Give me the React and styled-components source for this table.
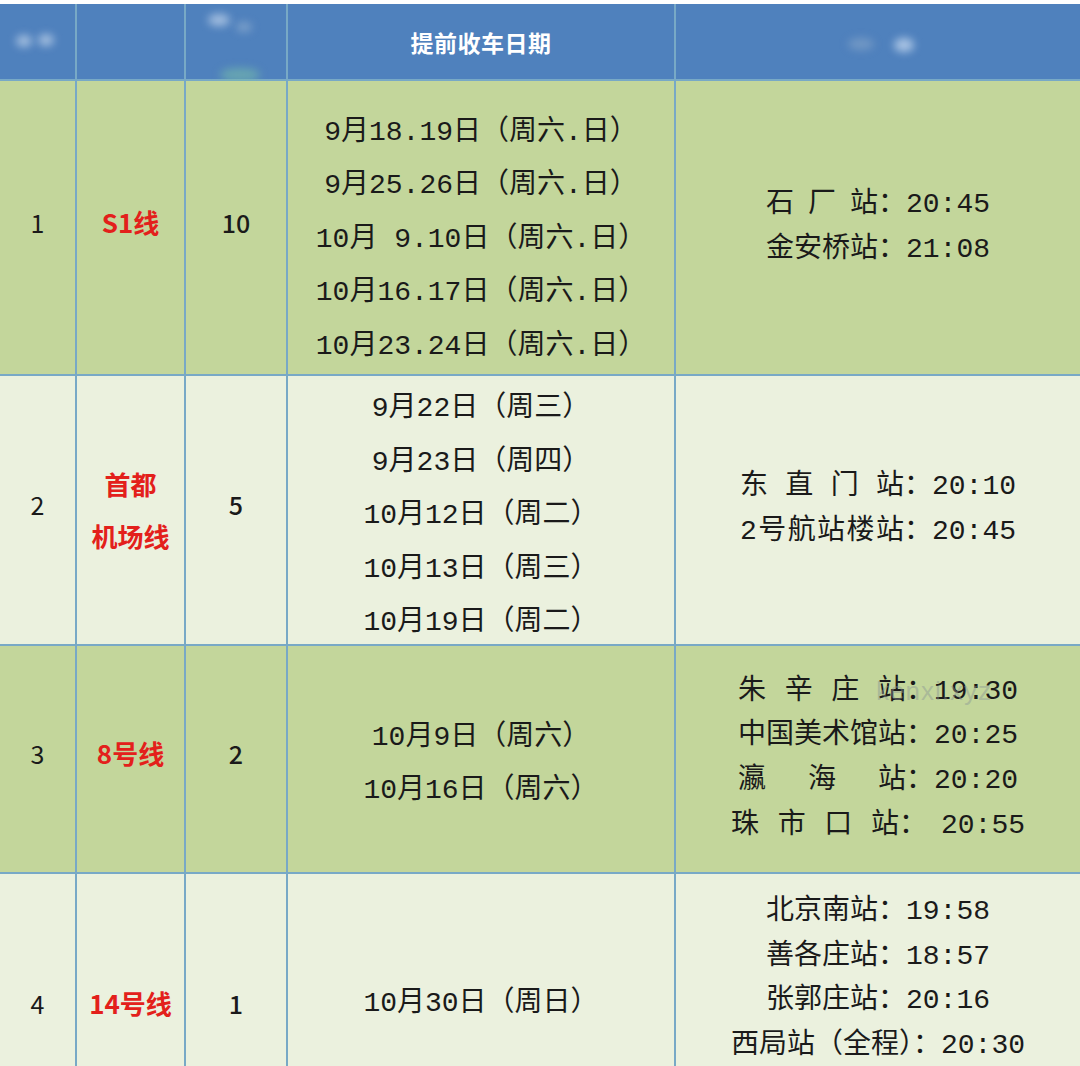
import React from "react";
import styled, { createGlobalStyle } from "styled-components";

const GlobalStyle = createGlobalStyle`
  html, body {
    margin: 0;
    padding: 0;
    background: #ffffff;
  }
  body {
    font-family: "Liberation Mono", "Noto Sans CJK SC", monospace;
    color: #1a1a1a;
  }
`;

const Page = styled.div`
  width: 1080px;
  height: 1066px;
  overflow: hidden;
  padding-top: 4px;
  box-sizing: border-box;
`;

const Table = styled.div`
  display: grid;
  grid-template-columns: 75px 107px 100px 386px 404px;
  grid-template-rows: 75px 293px 268px 226px 260px;
  gap: 2px;
  background: #78a9c6;
  width: 1080px;
`;

const Cell = styled.div`
  position: relative;
  display: flex;
  flex-direction: column;
  align-items: center;
  justify-content: ${(p) => (p.$top ? "flex-start" : "center")};
  padding-top: ${(p) => p.$pt || 0}px;
  box-sizing: border-box;
  background: ${(p) =>
    p.$tone === "head" ? "#4f81bd" : p.$tone === "green" ? "#c3d69b" : "#ebf1de"};
`;

const HeadText = styled.div`
  font-family: "Noto Sans CJK SC", sans-serif;
  font-weight: 700;
  font-size: 23px;
  color: #ffffff;
  letter-spacing: 0.5px;
`;

const Blob = styled.span`
  position: absolute;
  left: ${(p) => p.$x}px;
  top: ${(p) => p.$y}px;
  width: ${(p) => p.$w}px;
  height: ${(p) => p.$h}px;
  border-radius: 50%;
  background: ${(p) => p.$c || "rgba(220, 232, 246, 0.6)"};
  filter: blur(4px);
`;

const Num = styled.div`
  font-family: "Noto Sans CJK SC", sans-serif;
  font-size: 25px;
  font-weight: ${(p) => (p.$bold ? 500 : 400)};
  color: #1a1a1a;
  margin-bottom: ${(p) => p.$lift || 0}px;
`;

const LineName = styled.div`
  font-family: "Noto Sans CJK SC", sans-serif;
  font-size: 26px;
  font-weight: 700;
  color: #e3201b;
  line-height: 52px;
  text-align: center;
  margin-bottom: ${(p) => p.$lift || 0}px;
`;

const Dates = styled.div`
  display: flex;
  flex-direction: column;
  align-items: center;
  padding-top: ${(p) => p.$pt || 0}px;
`;

const DateLine = styled.div`
  font-size: 28px;
  line-height: 53.5px;
  white-space: pre;
`;

const Stations = styled.div`
  display: flex;
  flex-direction: column;
  align-items: center;
`;

const StationLine = styled.div`
  display: flex;
  align-items: baseline;
  font-size: 28px;
  line-height: 44.7px;
  white-space: pre;
`;

const Label = styled.span`
  display: inline-block;
  width: ${(p) => p.$w}px;
  text-align: justify;
  text-align-last: justify;
`;

const Time = styled.span`
  margin-left: ${(p) => p.$gap || 0}px;
`;

const Watermark = styled.span`
  position: absolute;
  left: 200px;
  top: 30px;
  font-family: "Liberation Sans", sans-serif;
  font-size: 26px;
  color: rgba(140, 150, 150, 0.45);
  letter-spacing: 1px;
  pointer-events: none;
`;

const rows = [
  {
    no: "1",
    line: ["S1线"],
    count: "10",
    tone: "green",
    lift: 12,
    dates: [
      "9月18.19日（周六.日）",
      "9月25.26日（周六.日）",
      "10月 9.10日（周六.日）",
      "10月16.17日（周六.日）",
      "10月23.24日（周六.日）",
    ],
    datePt: 24,
    labelW: 112,
    stations: [
      ["石厂站", "20:45"],
      ["金安桥站", "21:08"],
    ],
  },
  {
    no: "2",
    line: ["首都", "机场线"],
    count: "5",
    tone: "light",
    lift: 12,
    nameLift: 0,
    dates: [
      "9月22日（周三）",
      "9月23日（周四）",
      "10月12日（周二）",
      "10月13日（周三）",
      "10月19日（周二）",
    ],
    datePt: 12,
    labelW: 164,
    stations: [
      ["东直门站", "20:10"],
      ["2号航站楼站", "20:45"],
    ],
  },
  {
    no: "3",
    line: ["8号线"],
    count: "2",
    tone: "green",
    lift: 12,
    dates: ["10月9日（周六）", "10月16日（周六）"],
    datePt: 10,
    labelW: 168,
    watermark: true,
    stations: [
      ["朱辛庄站", "19:30"],
      ["中国美术馆站", "20:25"],
      ["瀛海站", "20:20"],
      ["珠市口站", "20:55", 14],
    ],
  },
  {
    no: "4",
    line: ["14号线"],
    count: "1",
    tone: "light",
    lift: 2,
    dates: ["10月30日（周日）"],
    datePt: 0,
    plain: true,
    stations: [
      "北京南站：19:58",
      "善各庄站：18:57",
      "张郭庄站：20:16",
      "西局站（全程）：20:30",
    ],
  },
];

const App = () => {
  return (
    <Page>
      <GlobalStyle />
      <Table>
        <Cell $tone="head">
          <Blob $x={16} $y={31} $w={16} $h={12} />
          <Blob $x={38} $y={30} $w={16} $h={12} />
        </Cell>
        <Cell $tone="head" />
        <Cell $tone="head">
          <Blob $x={22} $y={10} $w={22} $h={12} />
          <Blob $x={50} $y={18} $w={16} $h={10} $c="rgba(180, 200, 220, 0.45)" />
          <Blob $x={34} $y={64} $w={40} $h={14} $c="rgba(120, 190, 170, 0.6)" />
        </Cell>
        <Cell $tone="head">
          <HeadText>提前收车日期</HeadText>
        </Cell>
        <Cell $tone="head">
          <Blob $x={172} $y={34} $w={26} $h={12} $c="rgba(150, 175, 205, 0.5)" />
          <Blob $x={218} $y={34} $w={20} $h={14} $c="rgba(210, 225, 245, 0.7)" />
        </Cell>

        {rows.map((r) => (
          <React.Fragment key={r.no}>
            <Cell $tone={r.tone}>
              <Num $lift={r.lift}>{r.no}</Num>
            </Cell>
            <Cell $tone={r.tone}>
              <LineName $lift={r.nameLift ?? r.lift}>
                {r.line.map((l) => (
                  <div key={l}>{l}</div>
                ))}
              </LineName>
            </Cell>
            <Cell $tone={r.tone}>
              <Num $bold $lift={r.lift}>
                {r.count}
              </Num>
            </Cell>
            <Cell $tone={r.tone}>
              <Dates $pt={r.datePt}>
                {r.dates.map((d) => (
                  <DateLine key={d}>{d}</DateLine>
                ))}
              </Dates>
            </Cell>
            <Cell $tone={r.tone} $top={r.plain} $pt={r.plain ? 16 : 0}>
              <Stations>
                {r.plain
                  ? r.stations.map((s) => <StationLine key={s}>{s}</StationLine>)
                  : r.stations.map(([name, time, gap]) => (
                      <StationLine key={name}>
                        <Label $w={r.labelW}>{name}</Label>
                        <span>：</span>
                        <Time $gap={gap}>{time}</Time>
                      </StationLine>
                    ))}
              </Stations>
              {r.watermark && <Watermark>kenxi.xyz</Watermark>}
            </Cell>
          </React.Fragment>
        ))}
      </Table>
    </Page>
  );
};

export default App;
